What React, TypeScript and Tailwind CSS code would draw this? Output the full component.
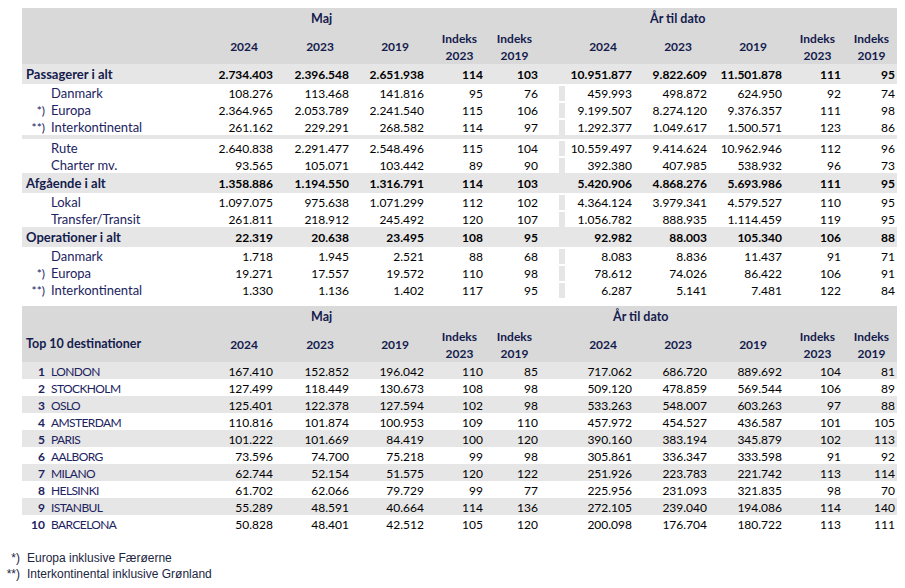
import React from "react";

const cols =
  "grid grid-cols-[178px_73px_76px_75px_59px_55px_21px_6px_67px_75px_75px_59px_54px_2px]";

type Row =
  | { kind: "total"; label: string; v: string[] }
  | { kind: "sub"; prefix?: string; label: string; v: string[] }
  | { kind: "gap" };

const traffic: Row[] = [
  { kind: "total", label: "Passagerer i alt", v: ["2.734.403", "2.396.548", "2.651.938", "114", "103", "10.951.877", "9.822.609", "11.501.878", "111", "95"] },
  { kind: "sub", label: "Danmark", v: ["108.276", "113.468", "141.816", "95", "76", "459.993", "498.872", "624.950", "92", "74"] },
  { kind: "sub", prefix: "*)", label: "Europa", v: ["2.364.965", "2.053.789", "2.241.540", "115", "106", "9.199.507", "8.274.120", "9.376.357", "111", "98"] },
  { kind: "sub", prefix: "**)", label: "Interkontinental", v: ["261.162", "229.291", "268.582", "114", "97", "1.292.377", "1.049.617", "1.500.571", "123", "86"] },
  { kind: "gap" },
  { kind: "sub", label: "Rute", v: ["2.640.838", "2.291.477", "2.548.496", "115", "104", "10.559.497", "9.414.624", "10.962.946", "112", "96"] },
  { kind: "sub", label: "Charter mv.", v: ["93.565", "105.071", "103.442", "89", "90", "392.380", "407.985", "538.932", "96", "73"] },
  { kind: "total", label: "Afgående i alt", v: ["1.358.886", "1.194.550", "1.316.791", "114", "103", "5.420.906", "4.868.276", "5.693.986", "111", "95"] },
  { kind: "sub", label: "Lokal", v: ["1.097.075", "975.638", "1.071.299", "112", "102", "4.364.124", "3.979.341", "4.579.527", "110", "95"] },
  { kind: "sub", label: "Transfer/Transit", v: ["261.811", "218.912", "245.492", "120", "107", "1.056.782", "888.935", "1.114.459", "119", "95"] },
  { kind: "total", label: "Operationer i alt", v: ["22.319", "20.638", "23.495", "108", "95", "92.982", "88.003", "105.340", "106", "88"] },
  { kind: "sub", label: "Danmark", v: ["1.718", "1.945", "2.521", "88", "68", "8.083", "8.836", "11.437", "91", "71"] },
  { kind: "sub", prefix: "*)", label: "Europa", v: ["19.271", "17.557", "19.572", "110", "98", "78.612", "74.026", "86.422", "106", "91"] },
  { kind: "sub", prefix: "**)", label: "Interkontinental", v: ["1.330", "1.136", "1.402", "117", "95", "6.287", "5.141", "7.481", "122", "84"] },
];

const destinations: [string, string[]][] = [
  ["LONDON", ["167.410", "152.852", "196.042", "110", "85", "717.062", "686.720", "889.692", "104", "81"]],
  ["STOCKHOLM", ["127.499", "118.449", "130.673", "108", "98", "509.120", "478.859", "569.544", "106", "89"]],
  ["OSLO", ["125.401", "122.378", "127.594", "102", "98", "533.263", "548.007", "603.263", "97", "88"]],
  ["AMSTERDAM", ["110.816", "101.874", "100.953", "109", "110", "457.972", "454.527", "436.587", "101", "105"]],
  ["PARIS", ["101.222", "101.669", "84.419", "100", "120", "390.160", "383.194", "345.879", "102", "113"]],
  ["AALBORG", ["73.596", "74.700", "75.218", "99", "98", "305.861", "336.347", "333.598", "91", "92"]],
  ["MILANO", ["62.744", "52.154", "51.575", "120", "122", "251.926", "223.783", "221.742", "113", "114"]],
  ["HELSINKI", ["61.702", "62.066", "79.729", "99", "77", "225.956", "231.093", "321.835", "98", "70"]],
  ["ISTANBUL", ["55.289", "48.591", "40.664", "114", "136", "272.105", "239.040", "194.086", "114", "140"]],
  ["BARCELONA", ["50.828", "48.401", "42.512", "105", "120", "200.098", "176.704", "180.722", "113", "111"]],
];

function Numbers({ v, stripe }: { v: string[]; stripe?: boolean }) {
  return (
    <>
      {v.slice(0, 5).map((n, i) => (
        <div key={i} className="text-right text-black">{n}</div>
      ))}
      <div />
      <div className={stripe ? "bg-[#e7e6e6]" : ""} />
      {v.slice(5).map((n, i) => (
        <div key={i + 5} className="text-right text-black">{n}</div>
      ))}
      <div />
    </>
  );
}

function Header({ title, second }: { title?: string; second: "top" | "bottom" }) {
  const year = "flex items-center justify-end pr-[15px]";
  const index = "flex items-center justify-end pr-[6px]";
  return (
    <div className="bg-[#d9d9d9] font-bold text-[#141b4d]">
      <div className={`${cols} h-[21px] leading-[21px]`}>
        <div />
        <div />
        <div className="pl-[38px] whitespace-nowrap text-[12.5px]">Maj</div>
        <div />
        <div />
        <div />
        <div />
        <div />
        {second === "top" ? (
          <>
            <div />
            <div className="pl-[18px] whitespace-nowrap text-[12.5px]">År til dato</div>
          </>
        ) : (
          <>
            <div className="pl-[48px] whitespace-nowrap text-[12.5px]">År til dato</div>
            <div />
          </>
        )}
      </div>
      <div className={`${cols} h-[35px]`}>
        <div className="flex items-center pl-[4px] whitespace-nowrap text-[12.5px]">{title}</div>
        <div className={year}>2024</div>
        <div className={year}>2023</div>
        <div className={year}>2019</div>
        <div className={index}>
          <div className="text-center leading-[17px]">Indeks<br />2023</div>
        </div>
        <div className={index}>
          <div className="text-center leading-[17px]">Indeks<br />2019</div>
        </div>
        <div />
        <div />
        <div className={year}>2024</div>
        <div className={year}>2023</div>
        <div className={year}>2019</div>
        <div className={index}>
          <div className="text-center leading-[17px]">Indeks<br />2023</div>
        </div>
        <div className={index}>
          <div className="text-center leading-[17px]">Indeks<br />2019</div>
        </div>
        <div />
      </div>
    </div>
  );
}

export default function App() {
  return (
    <div className="w-[905px] h-[588px] bg-white pl-[22px] pt-[8px] font-['Lato',sans-serif] text-[12px]">
      <div className="w-[875px]">
        <Header second="top" />
        {traffic.map((r, i) => {
          if (r.kind === "gap") return <div key={i} className="h-[4px] bg-[#e7e6e6]" />;
          if (r.kind === "total")
            return (
              <div key={i} className={`${cols} h-[20px] pt-px leading-[19px] bg-[#e7e6e6] font-bold`}>
                <div className="pl-[4px] text-[13px] text-[#141b4d] whitespace-nowrap">{r.label}</div>
                <Numbers v={r.v} />
              </div>
            );
          return (
            <div key={i} className={`${cols} h-[17px] pt-[2px] leading-[15px]`}>
              <div className="flex text-[#1b2360] whitespace-nowrap">
                <span className="w-[23px] text-right">{r.prefix}</span>
                <span className="ml-[6px] text-[13px]">{r.label}</span>
              </div>
              <Numbers v={r.v} stripe />
            </div>
          );
        })}
      </div>

      <div className="w-[875px] mt-[8px]">
        <Header second="bottom" title="Top 10 destinationer" />
        {destinations.map(([city, v], i) => (
          <div
            key={city}
            className={`${cols} h-[17px] pt-[2px] leading-[15px] ${i % 2 === 0 ? "bg-[#e7e6e6]" : ""}`}
          >
            <div className="flex text-[#1b2360] whitespace-nowrap">
              <span className="w-[23px] text-right font-bold">{i + 1}</span>
              <span className="ml-[6px] tracking-[-0.6px]">{city}</span>
            </div>
            <Numbers v={v} />
          </div>
        ))}
      </div>

      <div className="-ml-[22px] mt-[18px] font-['Liberation_Sans',Arial,sans-serif] text-[12px] leading-[16px] text-[#1c2541]">
        <div className="flex">
          <span className="w-[20px] text-right">*)</span>
          <span className="ml-[7px]">Europa inklusive Færøerne</span>
        </div>
        <div className="flex">
          <span className="w-[20px] text-right">**)</span>
          <span className="ml-[7px]">Interkontinental inklusive Grønland</span>
        </div>
      </div>
    </div>
  );
}
